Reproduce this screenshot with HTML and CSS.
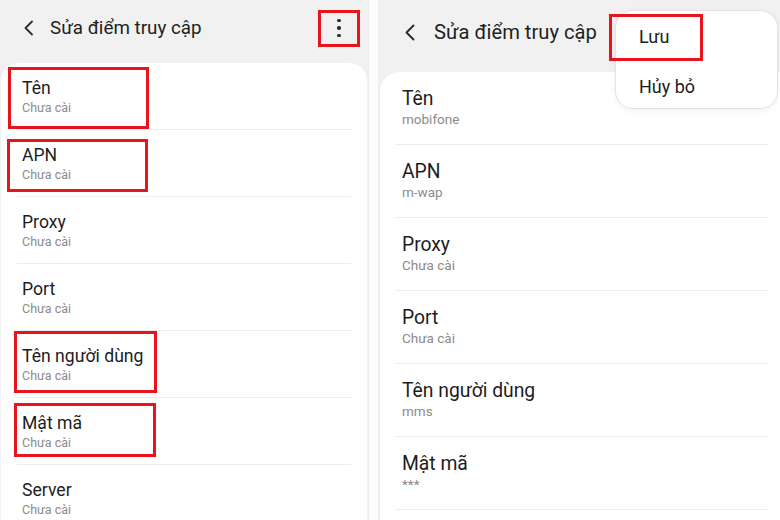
FILE: index.html
```html
<!DOCTYPE html>
<html lang="vi">
<head>
<meta charset="utf-8">
<title>Sửa điểm truy cập</title>
<link rel="stylesheet" href="styles.css">
</head>
<body>
<div class="page">
  <section class="phone phone-left">
    <header class="bar">
      <svg class="back" width="12" height="16" viewBox="0 0 12 16"><path d="M9 1.5 L2.5 8 L9 14.5" fill="none" stroke="#2a2a2a" stroke-width="1.8" stroke-linecap="round" stroke-linejoin="round"/></svg>
      <h1 class="title">Sửa điểm truy cập</h1>
      <div class="kebab">
        <span class="dot"></span><span class="dot"></span><span class="dot"></span>
        <span class="mark mark-kebab"></span>
      </div>
    </header>
    <div class="card">
      <div class="row"><div class="label">Tên</div><div class="value">Chưa cài</div><span class="mark mark-a"></span></div>
      <div class="row"><div class="label">APN</div><div class="value">Chưa cài</div><span class="mark mark-b"></span></div>
      <div class="row"><div class="label">Proxy</div><div class="value">Chưa cài</div></div>
      <div class="row"><div class="label">Port</div><div class="value">Chưa cài</div></div>
      <div class="row"><div class="label">Tên người dùng</div><div class="value">Chưa cài</div><span class="mark mark-c"></span></div>
      <div class="row"><div class="label">Mật mã</div><div class="value">Chưa cài</div><span class="mark mark-d"></span></div>
      <div class="row"><div class="label">Server</div><div class="value">Chưa cài</div></div>
    </div>
  </section>
  <div class="gutter"></div>
  <section class="phone phone-right">
    <header class="bar">
      <svg class="back" width="12" height="17" viewBox="0 0 12 17"><path d="M9.5 1.5 L2.5 8.5 L9.5 15.5" fill="none" stroke="#2a2a2a" stroke-width="1.9" stroke-linecap="round" stroke-linejoin="round"/></svg>
      <h1 class="title">Sửa điểm truy cập</h1>
    </header>
    <div class="menu">
      <div class="menu-item">Lưu<span class="mark mark-save"></span></div>
      <div class="menu-item">Hủy bỏ</div>
    </div>
    <div class="card">
      <div class="row"><div class="label">Tên</div><div class="value">mobifone</div></div>
      <div class="row"><div class="label">APN</div><div class="value">m-wap</div></div>
      <div class="row"><div class="label">Proxy</div><div class="value">Chưa cài</div></div>
      <div class="row"><div class="label">Port</div><div class="value">Chưa cài</div></div>
      <div class="row"><div class="label">Tên người dùng</div><div class="value">mms</div></div>
      <div class="row"><div class="label">Mật mã</div><div class="value">***</div></div>
    </div>
  </section>
</div>
</body>
</html>
```

FILE: styles.css
```css
* { box-sizing: border-box; margin: 0; padding: 0; }
html, body { width: 780px; height: 520px; overflow: hidden; background: #fbfbfb; }
body { font-family: Roboto, "Noto Sans", "Liberation Sans", sans-serif; color: #1d1d1d; }

.page { display: flex; width: 780px; height: 520px; }

.phone { position: relative; background: #f1f1f1; display: flex; flex-direction: column; overflow: hidden; }
.phone-left { width: 368px; }
.gutter { width: 11px; background: #fcfcfc; border-left: 1px solid #ececec; border-right: 1px solid #ececec; }
.phone-right { flex: 1; }

.bar { display: flex; align-items: center; position: relative; flex-shrink: 0; }
.title { font-weight: 400; color: #1f1f1f; }

.phone-left .bar { height: 63px; padding: 0 0 7px 23px; }
.phone-left .back { margin-right: 15px; }
.phone-left .title { font-size: 18.8px; }

.phone-right .bar { height: 72px; padding: 0 0 8px 25px; }
.phone-right .back { margin-right: 18px; margin-top: 1px; }
.phone-right .title { font-size: 20.2px; }

.kebab { position: relative; margin-left: auto; margin-right: 26px; width: 6px; display: flex; flex-direction: column; align-items: center; gap: 4px; }
.dot { width: 3.5px; height: 3.5px; border-radius: 50%; background: #2a2a2a; }

.card { background: #fff; flex: 1 0 auto; }
.phone-left .card { margin: 0 1px 0 1px; border-radius: 18px 18px 0 0; }
.phone-right .card { margin-left: 1px; border-radius: 20px 0 0 0; }

.row { position: relative; border-bottom: 1px solid #ededed; }
.label { color: #1d1d1d; }
.value { color: #8b8b8b; }

.phone-left .row { margin: 0 16px 0 16px; padding: 14px 0 12px 5px; }
.phone-left .label { font-size: 17.6px; line-height: 22px; }
.phone-left .value { font-size: 12.5px; line-height: 18px; }

.phone-right .row { margin: 0 12px 0 15px; padding: 15px 0 15px 7px; }
.phone-right .label { font-size: 19.3px; line-height: 23px; }
.phone-right .value { font-size: 13.5px; line-height: 19px; }

/* menu popup */
.menu { position: absolute; left: 236px; top: 10px; width: 163px; height: 99px; background: #fff; border: 1px solid #e3e3e3; border-radius: 18px; box-shadow: 0 2px 6px rgba(0,0,0,0.06); z-index: 2; padding-top: 1px; }
.menu-item { position: relative; height: 50px; line-height: 50px; padding-left: 23px; font-size: 18px; color: #1d1d1d; }

/* red annotation boxes */
.mark { position: absolute; border: 3px solid #e8141b; pointer-events: none; }
.mark-a { left: -9px; top: 4px; width: 141px; height: 62px; }
.mark-b { left: -10px; top: 9px; width: 141px; height: 53px; }
.mark-c { left: -3px; top: 0px; width: 143px; height: 62px; }
.mark-d { left: -3px; top: 5px; width: 142px; height: 54px; }
.mark-kebab { left: -18px; top: -9px; width: 42px; height: 37px; }
.mark-save { left: -7px; top: 2px; width: 94px; height: 47px; }
```
